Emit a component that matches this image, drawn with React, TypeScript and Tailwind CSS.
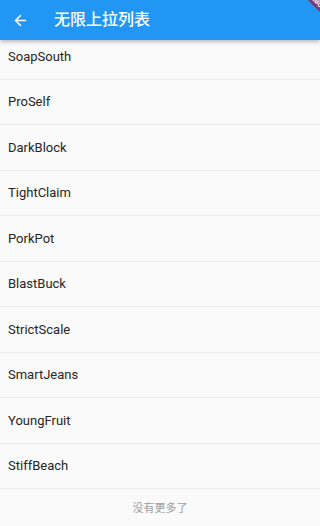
import { ArrowLeft } from 'lucide-react';

const items = [
  'SoapSouth',
  'ProSelf',
  'DarkBlock',
  'TightClaim',
  'PorkPot',
  'BlastBuck',
  'StrictScale',
  'SmartJeans',
  'YoungFruit',
  'StiffBeach',
];

export default function App() {
  return (
    <div
      className="relative h-[526px] w-[320px] overflow-hidden bg-[#fafafa]"
      style={{ fontFamily: 'Roboto, "Noto Sans CJK SC", sans-serif' }}
    >
      {/* App bar */}
      <header className="relative z-10 flex h-[40px] items-center bg-[#2196f3] shadow-[0_2px_4px_rgba(0,0,0,0.25)]">
        <div className="flex w-[40px] items-center justify-center">
          <ArrowLeft className="h-[17px] w-[17px] text-white" strokeWidth={2.2} />
        </div>
        <h1 className="ml-[14px] text-[16px] font-medium text-white">无限上拉列表</h1>
      </header>

      {/* Debug banner */}
      <div className="pointer-events-none absolute right-[-27px] top-[-3px] z-20 w-[60px] rotate-45 bg-[#a0163a]/75 text-center text-[7px] font-bold leading-[10px] text-white">
        DEBUG
      </div>

      {/* List */}
      <div className="overflow-hidden">
        <ul className="-mt-[6px]">
          {items.map((name) => (
            <li
              key={name}
              className="flex h-[45.5px] items-center border-b border-[#ececec] pl-[8px] text-[13px] font-normal text-[#262626]"
            >
              {name}
            </li>
          ))}
        </ul>
        <div className="flex h-[40px] items-center justify-center text-[11px] text-[#9e9e9e]">
          没有更多了
        </div>
      </div>
    </div>
  );
}
